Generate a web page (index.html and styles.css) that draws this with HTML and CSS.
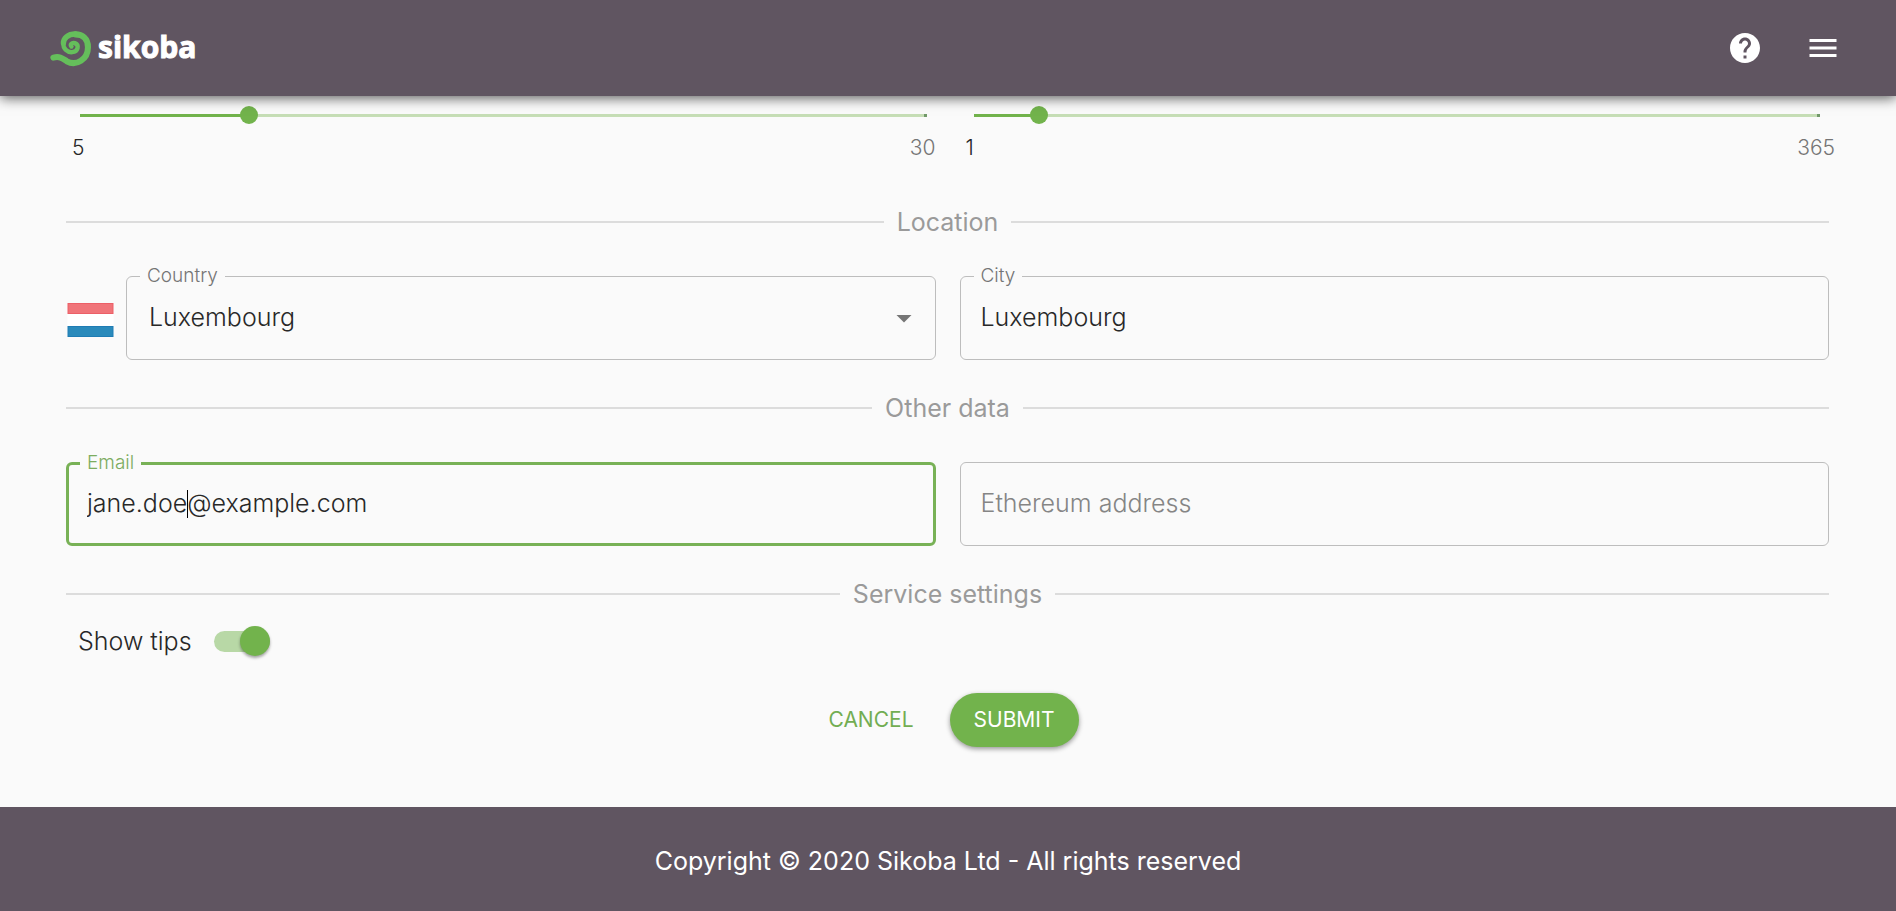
FILE: index.html
```html
<!DOCTYPE html>
<html lang="en">
<head>
<meta charset="utf-8">
<title>Sikoba</title>
<link rel="stylesheet" href="styles.css">
</head>
<body>
<header class="topbar">
  <a class="brand" href="#" aria-label="sikoba">
    <svg class="brand-mark" viewBox="0 0 125 107" fill="none" stroke="#65bf5b" stroke-linecap="round" stroke-linejoin="round">
      <path stroke-width="18" d="M10 79C30 74 38 82 50 90C78 106 113 84 113 48C113 22 96 10 76 10"/>
      <path stroke-width="16" d="M76 9C52 9 40 22 40 36"/>
      <path stroke-width="13" d="M40 36C38 53 52 64 66 63C84 61 88 42 74 36C65 33 59 40 64 46"/>
    </svg>
    <span class="brand-name">sikoba</span>
  </a>
  <nav class="actions">
    <button class="icon-btn" type="button" aria-label="Help">
      <svg viewBox="0 0 24 24" fill="#fff"><path d="M12 2C6.48 2 2 6.48 2 12s4.48 10 10 10 10-4.48 10-10S17.52 2 12 2zm1 17h-2v-2h2v2zm2.07-7.75l-.9.92C13.45 12.9 13 13.5 13 15h-2v-.5c0-1.1.45-2.1 1.17-2.83l1.24-1.26c.37-.36.59-.86.59-1.41 0-1.1-.9-2-2-2s-2 .9-2 2H8c0-2.21 1.79-4 4-4s4 1.790 4 4c0 .88-.36 1.680-.93 2.250z"/></svg>
    </button>
    <button class="icon-btn" type="button" aria-label="Menu">
      <svg viewBox="0 0 24 24" fill="#fff"><path d="M3 18h18v-2H3v2zm0-5h18v-2H3v2zm0-7v2h18V6H3z"/></svg>
    </button>
  </nav>
</header>

<main class="page">
  <form class="form">
    <div class="row">
      <div class="slider">
        <input class="range" style="--fill:20%" type="range" min="5" max="30" value="10" aria-label="Minimum 5, maximum 30">
        <div class="marks"><span class="mark-active">5</span><span>30</span></div>
      </div>
      <div class="slider">
        <input class="range" style="--fill:7.7%" type="range" min="1" max="365" value="29" aria-label="Minimum 1, maximum 365">
        <div class="marks marks-wide"><span class="mark-active">1</span><span>365</span></div>
      </div>
    </div>

    <h2 class="divider divider-first">Location</h2>
    <div class="row">
      <div class="country">
        <svg class="flag" viewBox="0 0 46 34" aria-hidden="true">
          <path fill="#fff" d="M0 0h46v34H0z"/><path fill="#ec5f67" d="M0 0h46v11H0z"/><path fill="#f07479" d="M1 1h44v9H1z"/><path fill="#1f7cb4" d="M0 23h46v11H0z"/><path fill="#2a8abb" d="M1 24h44v9H1z"/>
        </svg>
        <div class="field">
          <label class="label" for="country">Country</label>
          <select class="control select" id="country"><option>Luxembourg</option></select>
          <svg class="arrow" viewBox="0 0 24 24" aria-hidden="true"><path fill="#757575" d="M7 10l5 5 5-5z"/></svg>
        </div>
      </div>
      <div class="field">
        <label class="label" for="city">City</label>
        <input class="control" id="city" type="text" value="Luxembourg">
      </div>
    </div>

    <h2 class="divider">Other data</h2>
    <div class="row">
      <div class="field field-focused">
        <label class="label" for="email">Email</label>
        <input class="control" id="email" type="text" value="jane.doe@example.com">
        <span class="caret"></span>
      </div>
      <div class="field">
        <input class="control" type="text" placeholder="Ethereum address" aria-label="Ethereum address">
      </div>
    </div>

    <h2 class="divider divider-last">Service settings</h2>
    <label class="tips">Show tips <input class="switch" type="checkbox" checked></label>

    <div class="buttons">
      <button class="btn" type="button">CANCEL</button>
      <button class="btn btn-primary" type="submit">SUBMIT</button>
    </div>
  </form>
</main>

<footer class="footer">Copyright © 2020 Sikoba Ltd - All rights reserved</footer>
</body>
</html>
```
FILE: styles.css
```css
* { box-sizing: border-box; }
body {
  margin: 0;
  min-height: 100vh;
  display: flex;
  flex-direction: column;
  background: #fafafa;
  color: #282828;
  font: 300 25px/32px Inter, "Open Sans", sans-serif;
}
input, select, button { font: inherit; color: inherit; margin: 0; }
.topbar {
  position: relative;
  height: 96px;
  padding: 0 46px 0 50px;
  display: flex;
  align-items: center;
  justify-content: space-between;
  background: #605561;
  box-shadow: 0 2px 12px rgba(0, 0, 0, .65);
}
.brand { display: flex; align-items: center; gap: 6px; padding-top: 2px; color: #fff; text-decoration: none; }
.brand-mark { width: 42px; height: 36px; }
.brand-name {
  font: 700 30px/40px "Open Sans", sans-serif;
  -webkit-text-stroke: 1px #fff;
  padding-bottom: 4px;
}
.actions { display: flex; gap: 24px; }
.icon-btn { width: 54px; height: 54px; padding: 9px; border: 0; background: none; }
.icon-btn svg { display: block; width: 36px; height: 36px; }

.page { flex: 1; padding: 0 67px 0 66px; }
.row { display: grid; grid-template-columns: 1fr 1fr; gap: 24px; }
.slider { padding: 10px 0 0 5px; }
.range {
  appearance: none;
  display: block;
  width: 100%;
  height: 18px;
  background:
    linear-gradient(to right, #72b34c var(--fill), #c6deb6 var(--fill), #c6deb6 calc(100% - 3px), #72996a calc(100% - 3px)) center / calc(100% - 18px) 3px no-repeat;
}
.range::-webkit-slider-thumb {
  appearance: none;
  width: 18px;
  height: 18px;
  border-radius: 50%;
  background: #72b34c;
}
.marks { display: flex; justify-content: space-between; margin-top: 8px; padding-left: 1px; font-size: 21px; line-height: 32px; color: #757575; }
.marks-wide { margin-right: -6px; }
.mark-active { color: #282828; }

.divider {
  display: flex;
  align-items: center;
  gap: 13px;
  margin: 32px 0 38px;
  font-size: 25px;
  line-height: 32px;
  font-weight: 400;
  color: #9a9a9a;
}
.divider::before, .divider::after { content: ""; flex: 1; height: 2px; background: #dcdcdc; }
.divider-first { margin-top: 42px; }
.divider-last { margin-bottom: 15px; }

.country { display: flex; align-items: center; gap: 12px; }
.flag { width: 48px; height: 34px; padding-left: 1px; margin-top: 3px; }
.field { position: relative; flex: 1; height: 84px; border: 1px solid #bdbdbd; border-radius: 6px; }
.control {
  appearance: none;
  display: block;
  width: 100%;
  height: 100%;
  padding: 0 20px 2px;
  border: 0;
  outline: 0;
  background: none;
}
.select { padding-left: 22px; }
.control::placeholder { color: #858585; opacity: 1; }
.label {
  position: absolute;
  left: 13px;
  top: -13px;
  padding: 0 7px;
  background: #fafafa;
  font-size: 19px;
  line-height: 24px;
  color: #757575;
}
.arrow { position: absolute; right: 13px; top: 23px; width: 36px; height: 36px; }
.field-focused { border: 3px solid #78b156; }
.field-focused .control { padding: 0 18px 2px; }
.field-focused .label { left: 11px; top: -14px; color: #7cac60; }
.caret { position: absolute; left: 118px; top: 25px; width: 1px; height: 28px; background: #000; }

.tips { display: flex; align-items: center; gap: 22px; width: max-content; padding-left: 12px; }
.switch {
  appearance: none;
  position: relative;
  width: 56px;
  height: 21px;
  border-radius: 11px;
  background: #b8d8a6;
}
.switch::before {
  content: "";
  position: absolute;
  right: 0;
  top: -5px;
  width: 30px;
  height: 30px;
  border-radius: 50%;
  background: #72b34c;
  box-shadow: 0 2px 3px rgba(0, 0, 0, .35);
}

.buttons { display: flex; justify-content: center; gap: 12px; margin: 36px 0 59px; padding-right: 12px; }
.btn { height: 54px; padding: 0 24px; border: 0; border-radius: 27px; background: none; color: #72ad52; font-size: 21px; font-weight: 400; }
.btn-primary { background: #72b34c; color: #fff; box-shadow: 0 2px 5px rgba(0, 0, 0, .4); }

.footer {
  height: 104px;
  display: flex;
  align-items: center;
  justify-content: center;
  padding-top: 4px;
  background: #605561;
  color: #fff;
  font-weight: 400;
}
```
